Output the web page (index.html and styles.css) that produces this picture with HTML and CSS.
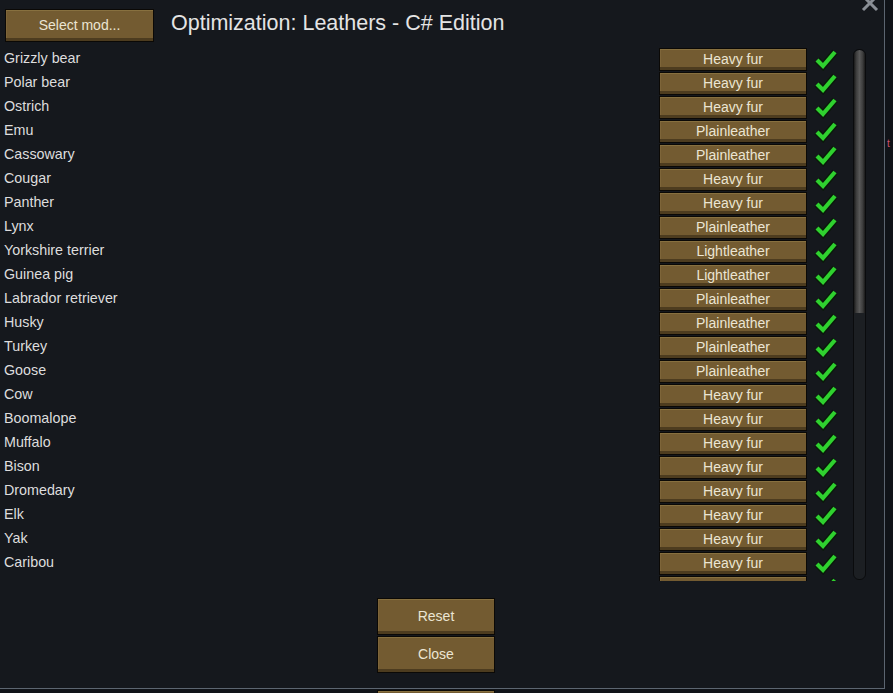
FILE: index.html
```html
<!DOCTYPE html>
<html>
<head>
<meta charset="utf-8">
<link rel="stylesheet" href="styles.css">
</head>
<body>
<div class="window">
  <div class="header">
    <button class="btn select">Select mod...</button>
    <div class="title">Optimization: Leathers - C# Edition</div>
  </div>
  <div class="listwrap">
    <div class="list" id="list"></div>
    <div class="scrollbar"><div class="thumb"></div></div>
  </div>
  <div class="footer">
    <button class="btn big">Reset</button>
    <button class="btn big">Close</button>
  </div>
  <div class="closex">
    <svg width="18" height="14" viewBox="0 0 18 14"><path d="M2 -4 L16 10 M16 -4 L2 10" stroke="#8a8f96" stroke-width="3" fill="none"/></svg>
  </div>
</div>
<div class="outside"><span class="pink">t</span></div>
<button class="btn big peek"></button>
<script>
var rows=[["Grizzly bear","Heavy fur"],["Polar bear","Heavy fur"],["Ostrich","Heavy fur"],["Emu","Plainleather"],["Cassowary","Plainleather"],["Cougar","Heavy fur"],["Panther","Heavy fur"],["Lynx","Plainleather"],["Yorkshire terrier","Lightleather"],["Guinea pig","Lightleather"],["Labrador retriever","Plainleather"],["Husky","Plainleather"],["Turkey","Plainleather"],["Goose","Plainleather"],["Cow","Heavy fur"],["Boomalope","Heavy fur"],["Muffalo","Heavy fur"],["Bison","Heavy fur"],["Dromedary","Heavy fur"],["Elk","Heavy fur"],["Yak","Heavy fur"],["Caribou","Heavy fur"],["Horse","Plainleather"]];
var check='<svg class="check" width="26" height="24" viewBox="0 0 26 24"><path d="M4 13 L10 19 L22 5" stroke="#0a1a0a" stroke-width="7" fill="none" stroke-linejoin="miter"/><path d="M4 13 L10 19 L22 5" stroke="#2fd12f" stroke-width="4.2" fill="none"/></svg>';
var h='';
rows.forEach(function(r){h+='<div class="row"><span class="name">'+r[0]+'</span><button class="btn small">'+r[1]+'</button>'+check+'</div>';});
document.getElementById('list').innerHTML=h;
</script>
</body>
</html>
```
FILE: styles.css
```css
html,body{margin:0;padding:0;}
body{width:893px;height:693px;overflow:hidden;background:#101318;font-family:"Liberation Sans",Arial,sans-serif;position:relative;}
.window{position:relative;width:885px;height:689px;background:#15181d;border-right:1px solid #5c6570;border-bottom:1px solid #5c6570;display:flex;flex-direction:column;box-sizing:border-box;}
.btn{font-family:"Liberation Sans",Arial,sans-serif;color:#ebe5d3;background:#735b31;border:1px solid #0b0906;box-shadow:inset 0 -3px 0 #4d3c1f,inset 0 1px 0 #87703f,inset 1px 0 0 #7e6539;padding:0;margin:0;cursor:pointer;}
.header{height:48px;display:flex;align-items:flex-start;}
.select{margin:9px 0 0 5px;width:149px;height:33px;font-size:14px;padding-bottom:1px;}
.title{margin:10px 0 0 17px;font-size:21.5px;color:#e4e4e4;line-height:26px;}
.listwrap{display:flex;height:533px;}
.list{width:843px;height:533px;overflow:hidden;}
.row{height:24px;display:flex;align-items:flex-start;}
.name{width:659px;font-size:14.3px;color:#dddddd;line-height:20px;padding-left:4px;box-sizing:border-box;}
.small{width:148px;height:23px;font-size:14px;line-height:19px;padding-bottom:1px;box-sizing:border-box;}
.check{margin:-1px 0 0 6px;}
.scrollbar{margin:1px 0 0 10px;width:13px;height:531px;border-radius:6px;background:#1c1f23;border:1px solid #0a0b0d;box-sizing:border-box;position:relative;overflow:hidden;}
.thumb{height:263px;border-radius:6px 6px 0 0;background:linear-gradient(90deg,#1a1a1a 0,#3c3c3c 20%,#585858 50%,#3c3c3c 80%,#1a1a1a 100%);}
.footer{display:flex;flex-direction:column;align-items:flex-start;padding:17px 0 0 377px;gap:1px;}
.big{width:118px;height:37px;font-size:14px;padding-bottom:2px;}
.closex{position:absolute;left:861px;top:0;}
.outside{position:absolute;left:886px;top:0;width:7px;height:693px;}
.pink{position:absolute;left:1px;top:138px;font-size:10px;color:#d05070;}
.peek{position:absolute;left:377px;top:690px;width:118px;height:20px;}
```
